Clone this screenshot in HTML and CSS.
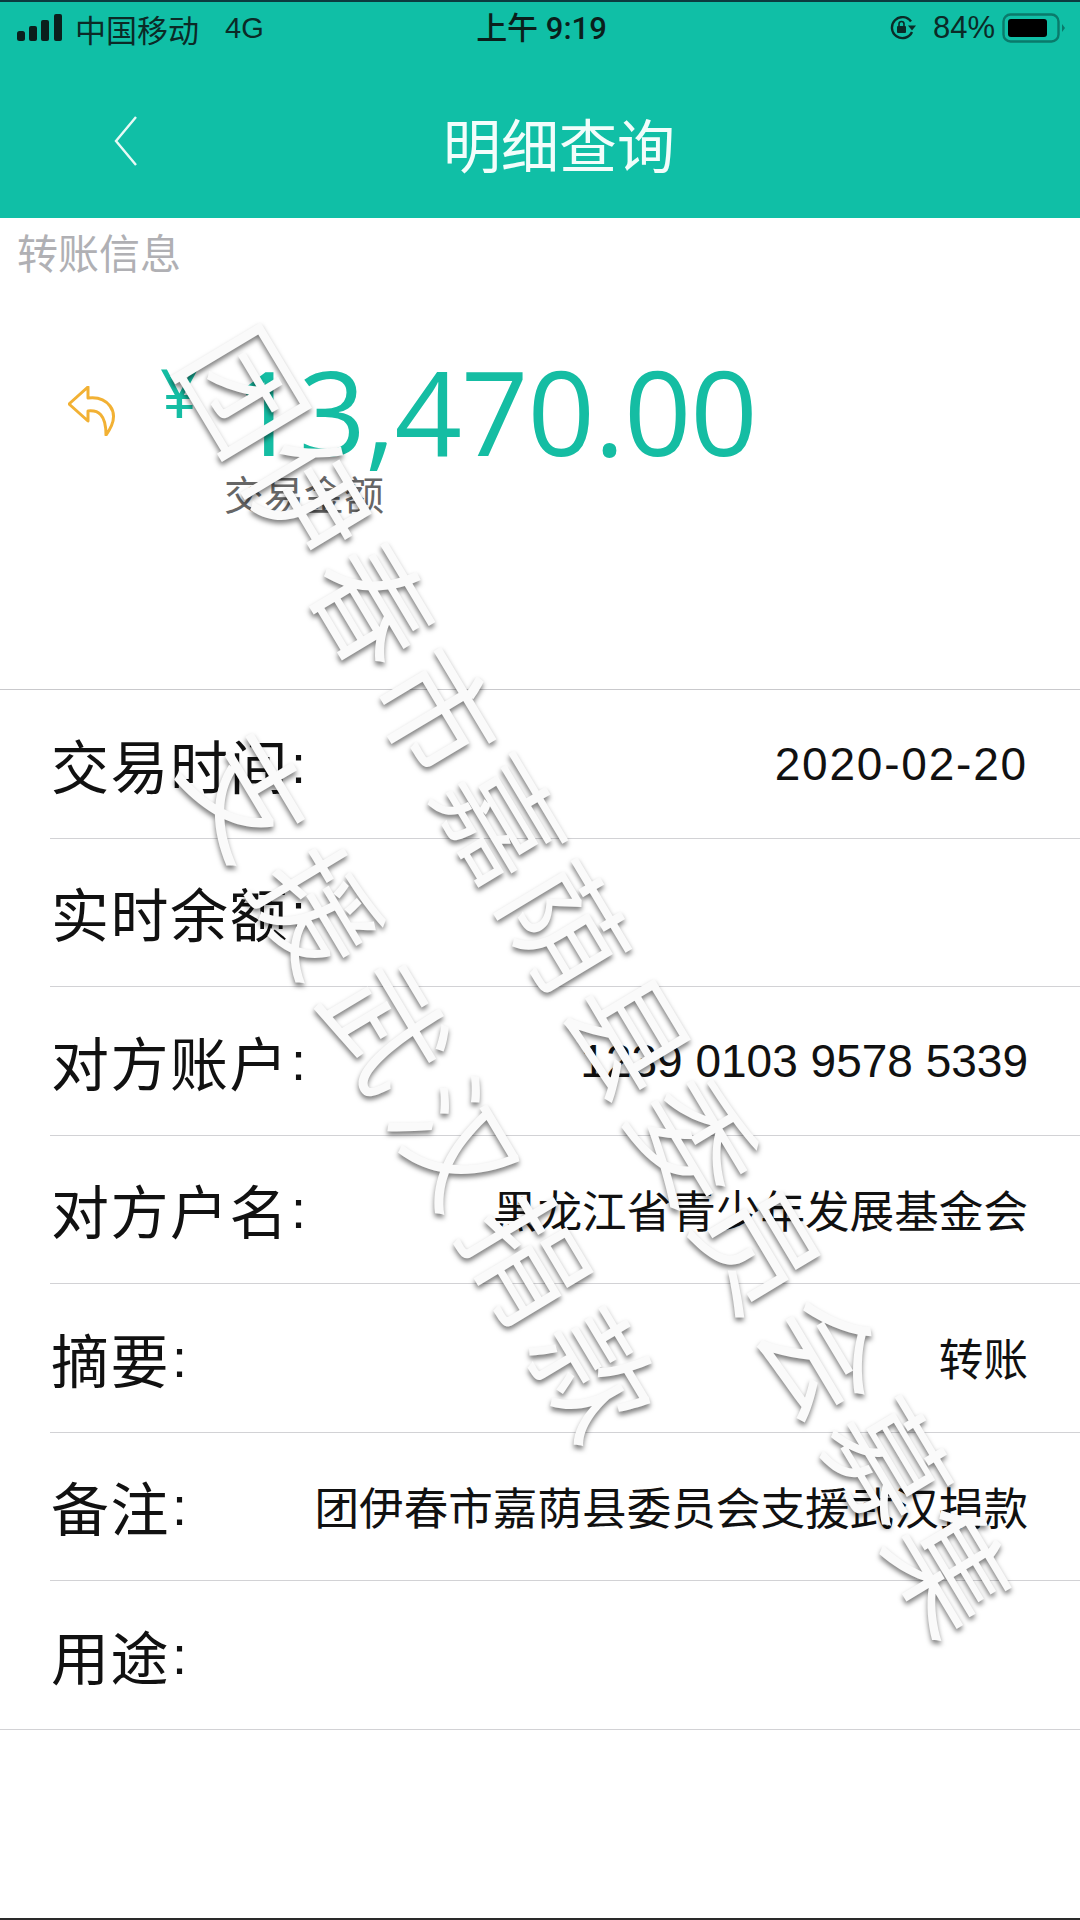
FILE: index.html
```html
<!DOCTYPE html>
<html lang="zh-CN">
<head>
<meta charset="utf-8">
<title>明细查询</title>
<link rel="stylesheet" href="styles.css">
</head>
<body>
<div class="page">
  <header class="header">
    <div class="status">
      <div class="status-left">
        <svg class="signal" width="46" height="28" viewBox="0 0 46 28"><rect x="0" y="17" width="8" height="10" rx="2.500"/><rect x="12" y="12" width="8" height="15" rx="2"/><rect x="24" y="6" width="8" height="21" rx="2"/><rect x="37" y="0" width="8" height="27" rx="2"/></svg>
        <span class="carrier">中国移动</span>
        <span class="net">4G</span>
      </div>
      <div class="clock">上午 9:19</div>
      <div class="status-right">
        <svg class="lock" width="28" height="24" viewBox="0 0 28 24"><path d="M22 5.500A10.500 10.500 0 1 0 23 16" fill="none" stroke="#0b2a27" stroke-width="2.400"/><path d="M19 9.500h8l-4 5z" fill="#0b2a27"/><rect x="8" y="10" width="9" height="7" rx="1" fill="#0b2a27"/><path d="M10 10V8a2.500 2.500 0 0 1 5 0v2" fill="none" stroke="#0b2a27" stroke-width="1.600"/></svg>
        <span class="pct">84%</span>
        <svg class="battery" width="64" height="30" viewBox="0 0 64 30"><rect x="1.500" y="1.500" width="55" height="27" rx="7" fill="none" stroke="#0a7a6b" stroke-width="2.400"/><rect x="6" y="6" width="39" height="18" rx="3" fill="#000"/><path d="M60 11l3 4-3 4z" fill="#0a7a6b"/></svg>
      </div>
    </div>
    <div class="nav">
      <svg class="back" width="24" height="50" viewBox="0 0 24 50"><path d="M22 1 2 25l20 24" fill="none" stroke="#e8faf6" stroke-width="2.400"/></svg>
      <h1 class="title">明细查询</h1>
    </div>
  </header>

  <div class="section-label">转账信息</div>

  <section class="hero">
    <div class="amount-row">
      <svg class="reply" width="48" height="50" viewBox="0 0 48 50"><path d="M20 1 1 18 20 35V25C30 24 38 28 38 49 46 38 48 28 42 20 36 12 28 11 20 12Z" fill="none" stroke="#f2b134" stroke-width="3" stroke-linejoin="round"/></svg>
      <div class="amount-block">
        <div class="amount"><span class="yen">¥</span><span class="num">13,470.00</span></div>
        <div class="amount-label">交易金额</div>
      </div>
    </div>
  </section>

  <ul class="rows">
    <li class="row"><span class="key">交易时间<i class="colon">:</i></span><span class="val date">2020-02-20</span></li>
    <li class="row"><span class="key">实时余额<i class="colon">:</i></span><span class="val"></span></li>
    <li class="row"><span class="key">对方账户<i class="colon">:</i></span><span class="val acct">1239 0103 9578 5339</span></li>
    <li class="row"><span class="key">对方户名<i class="colon">:</i></span><span class="val">黑龙江省青少年发展基金会</span></li>
    <li class="row"><span class="key">摘要<i class="colon">:</i></span><span class="val">转账</span></li>
    <li class="row"><span class="key">备注<i class="colon">:</i></span><span class="val">团伊春市嘉荫县委员会支援武汉捐款</span></li>
    <li class="row row-last"><span class="key">用途<i class="colon">:</i></span><span class="val"></span></li>
  </ul>

  <div class="wm wm-a">团伊春市嘉荫县委员会募集</div>
  <div class="wm wm-b">支援武汉捐款</div>
</div>
</body>
</html>
```
FILE: styles.css
```css
* { box-sizing: border-box; margin: 0; padding: 0; }
html, body { width: 1080px; height: 1920px; overflow: hidden; background: #fff; }
body { font-family: "Liberation Sans", "Noto Sans CJK SC", sans-serif; color: #111; }
.page { position: relative; width: 1080px; height: 1920px; overflow: hidden; background: #fff; border-bottom: 2px solid #2a2a2a; }

.header { height: 218px; background: #10bfa6; border-top: 2px solid #0c3b3f; display: flex; flex-direction: column; }
.status { height: 52px; padding: 0 14px 0 17px; display: grid; grid-template-columns: 1fr auto 1fr; align-items: center; color: #0b2a27; }
.status-left { display: flex; align-items: center; gap: 12px; }
.signal { fill: #0b1f1c; flex: none; }
.carrier { font: 400 31px/1 "Noto Sans CJK SC", sans-serif; }
.net { font-size: 29px; margin-left: 14px; }
.clock { font: 500 31px/1 Roboto, "Noto Sans CJK SC", sans-serif; color: #0a1f1c; }
.status-right { display: flex; align-items: center; justify-content: flex-end; gap: 16px; }
.pct { font-size: 31px; margin-right: -9px; }

.nav { flex: 1; display: flex; align-items: center; padding: 14px 0 0 114px; }
.back { flex: none; margin-bottom: 4px; }
.title { margin-left: 305px; font: 400 58px/1 "Noto Sans CJK SC", sans-serif; color: #f2fdfb; }

.section-label { height: 68px; padding-left: 17px; font: 400 41px/66px "Noto Sans CJK SC", sans-serif; color: #b0b0b4; }

.hero { height: 404px; border-bottom: 1px solid #c9c9cc; }
.amount-row { display: flex; align-items: flex-start; padding: 66px 0 0 68px; }
.reply { flex: none; margin-top: 34px; }
.amount-block { margin-left: 44px; }
.amount { display: flex; align-items: flex-start; color: #15bda3; font-family: "Open Sans", sans-serif; font-weight: 400; line-height: 1; }
.yen { font-size: 68px; line-height: 68px; margin-top: 6px; width: 72px; }
.num { font-size: 118px; line-height: 118px; letter-spacing: -1px; }
.amount-label { margin: -1px 0 0 64px; font: 400 40px/1.2 "Noto Sans CJK SC", sans-serif; color: #666; }

.rows { list-style: none; }
.row { height: 148.5px; margin-left: 50px; padding: 0 52px 0 1px; border-bottom: 1px solid #d2d2d5; display: flex; align-items: center; justify-content: space-between; }
.row-last { margin-left: 0; padding-left: 51px; }
.key { font: 400 58px/1 "Noto Sans CJK SC", sans-serif; letter-spacing: 1.500px; color: #111; display: flex; align-items: center; }
.colon { font: 400 54px/1 "Liberation Sans", sans-serif; margin-left: 2px; }
.val { font: 400 44.600px/1 "Noto Sans CJK SC", sans-serif; color: #111; }
.date { font: 400 46px/1 "Liberation Sans", sans-serif; letter-spacing: 1.800px; }
.acct { font: 400 46px/1 "Liberation Sans", sans-serif; }

.wm { position: absolute; white-space: nowrap; transform-origin: 0 50%; transform: rotate(59deg); font: 400 120px/1 "Noto Sans CJK SC", sans-serif; color: #fafafa; text-shadow: 3px 2px 5px rgba(0,0,0,.5); }
.wm-a { left: 218px; top: 276px; letter-spacing: 5px; }
.wm-b { left: 222px; top: 680px; letter-spacing: 15px; }
```
